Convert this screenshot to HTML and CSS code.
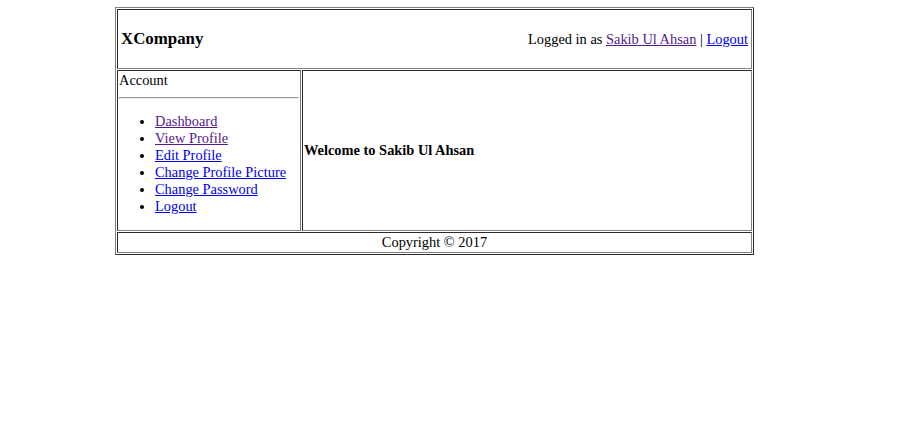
FILE: index.html
```html
<!DOCTYPE html>
<html>
<head>
<meta charset="utf-8">
<title>XCompany</title>
<link rel="stylesheet" href="styles.css">
</head>
<body>
<table class="layout">
  <tr>
    <td class="header" colspan="2">
      <div class="header-inner">
        <h3 class="brand">XCompany</h3>
        <div class="user">Logged in as <a class="visited" href="#">Sakib Ul Ahsan</a> | <a class="link" href="#">Logout</a></div>
      </div>
    </td>
  </tr>
  <tr>
    <td class="sidebar">
      <div class="side-title">Account</div>
      <hr class="rule">
      <ul class="menu">
        <li><a class="visited" href="#">Dashboard</a></li>
        <li><a class="visited" href="#">View Profile</a></li>
        <li><a class="link" href="#">Edit Profile</a></li>
        <li><a class="link" href="#">Change Profile Picture</a></li>
        <li><a class="link" href="#">Change Password</a></li>
        <li><a class="link" href="#">Logout</a></li>
      </ul>
    </td>
    <td class="main">
      <h4 class="welcome">Welcome to Sakib Ul Ahsan</h4>
    </td>
  </tr>
  <tr>
    <td class="footer" colspan="2">Copyright © 2017</td>
  </tr>
</table>
</body>
</html>
```
FILE: styles.css
```css
html, body {
  background: #ffffff;
}
body {
  margin: 0;
  font-family: "Liberation Serif", "Times New Roman", serif;
  font-size: 14.4px;
  line-height: 17px;
  color: #000000;
}
.layout {
  margin: 7px 0 0 115px;
  width: 639px;
  border: 1px outset gray;
  border-spacing: 1px;
}
.layout td {
  border: 1px inset gray;
  padding: 1px;
}
.layout td.header {
  padding: 1px 3px;
}
.header-inner {
  height: 56px;
  display: flex;
  align-items: center;
  justify-content: space-between;
}
.brand {
  margin: 0;
  font-size: 16.85px;
  line-height: 20px;
  font-weight: bold;
}
.user {
  line-height: 17px;
}
.sidebar {
  width: 180px;
  vertical-align: top;
}
.side-title {
  line-height: 17px;
}
.rule {
  margin: 8px 0 0;
}
.menu {
  margin: 14px 0;
  padding-left: 36px;
}
.menu li {
  line-height: 17px;
}
.main {
  vertical-align: middle;
}
.welcome {
  margin: 0;
  font-size: 14.4px;
  line-height: 17px;
  font-weight: bold;
}
.footer {
  text-align: center;
}
.visited {
  color: #551a8b;
}
.link {
  color: #0000ee;
}
```
